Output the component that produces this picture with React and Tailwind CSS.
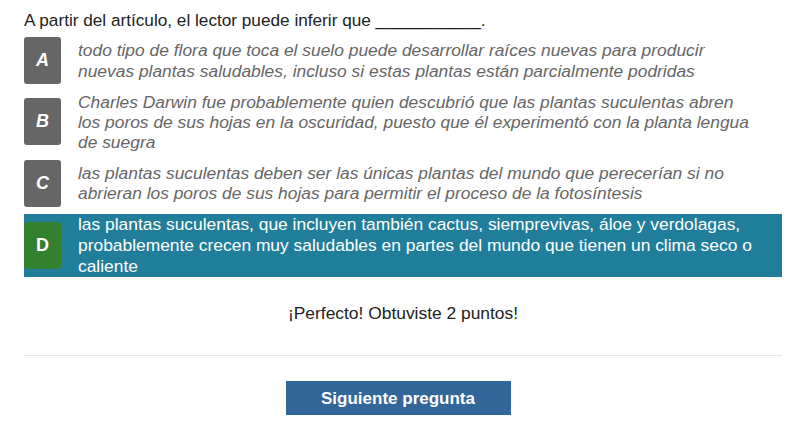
import React from 'react'

const options = [
  {
    letter: 'A',
    text: 'todo tipo de flora que toca el suelo puede desarrollar raíces nuevas para producir nuevas plantas saludables, incluso si estas plantas están parcialmente podridas',
  },
  {
    letter: 'B',
    text: 'Charles Darwin fue probablemente quien descubrió que las plantas suculentas abren los poros de sus hojas en la oscuridad, puesto que él experimentó con la planta lengua de suegra',
  },
  {
    letter: 'C',
    text: 'las plantas suculentas deben ser las únicas plantas del mundo que perecerían si no abrieran los poros de sus hojas para permitir el proceso de la fotosíntesis',
  },
  {
    letter: 'D',
    text: 'las plantas suculentas, que incluyen también cactus, siemprevivas, áloe y verdolagas, probablemente crecen muy saludables en partes del mundo que tienen un clima seco o caliente',
    correct: true,
  },
]

function Option({ letter, text, correct }) {
  if (correct) {
    return (
      <div className="flex items-center bg-[#217e9a] min-h-[47px]">
        <div className="w-[37px] h-[47px] shrink-0 rounded-[3px] bg-[#33802f] text-white font-bold text-[18px] flex items-center justify-center">
          {letter}
        </div>
        <p className="pl-[17px] pr-[25px] text-white text-[17.4px] leading-[21px]">{text}</p>
      </div>
    )
  }
  return (
    <div className="flex items-center min-h-[47px]">
      <div className="w-[37px] h-[47px] shrink-0 rounded-[3px] bg-[#666666] text-white font-bold italic text-[18px] flex items-center justify-center">
        {letter}
      </div>
      <p className="pl-[17px] pr-[25px] text-[#666666] italic text-[17.4px] leading-[20.3px]">{text}</p>
    </div>
  )
}

function App() {
  return (
    <div className="bg-white w-[794px] h-[422px] pl-[24px] pr-[12px] pt-[8px] text-[#222222]" style={{ fontFamily: '"Liberation Sans", Arial, sans-serif' }}>
      <p className="text-[17.2px] leading-[24px]">A partir del artículo, el lector puede inferir que ___________.</p>

      <div className="flex flex-col gap-[7.5px] mt-[5px]">
        {options.map((o) => (
          <Option key={o.letter} {...o} />
        ))}
      </div>

      <p className="text-center text-[17.4px] leading-[24px] mt-[24px]">¡Perfecto! Obtuviste 2 puntos!</p>

      <div className="border-t border-[#e6e6e6] mt-[30px]" />

      <div className="flex justify-center mt-[25px]">
        <button className="w-[225px] h-[34px] bg-[#336699] text-white font-bold text-[17px] ml-[-10px]">
          Siguiente pregunta
        </button>
      </div>
    </div>
  )
}

export default App
